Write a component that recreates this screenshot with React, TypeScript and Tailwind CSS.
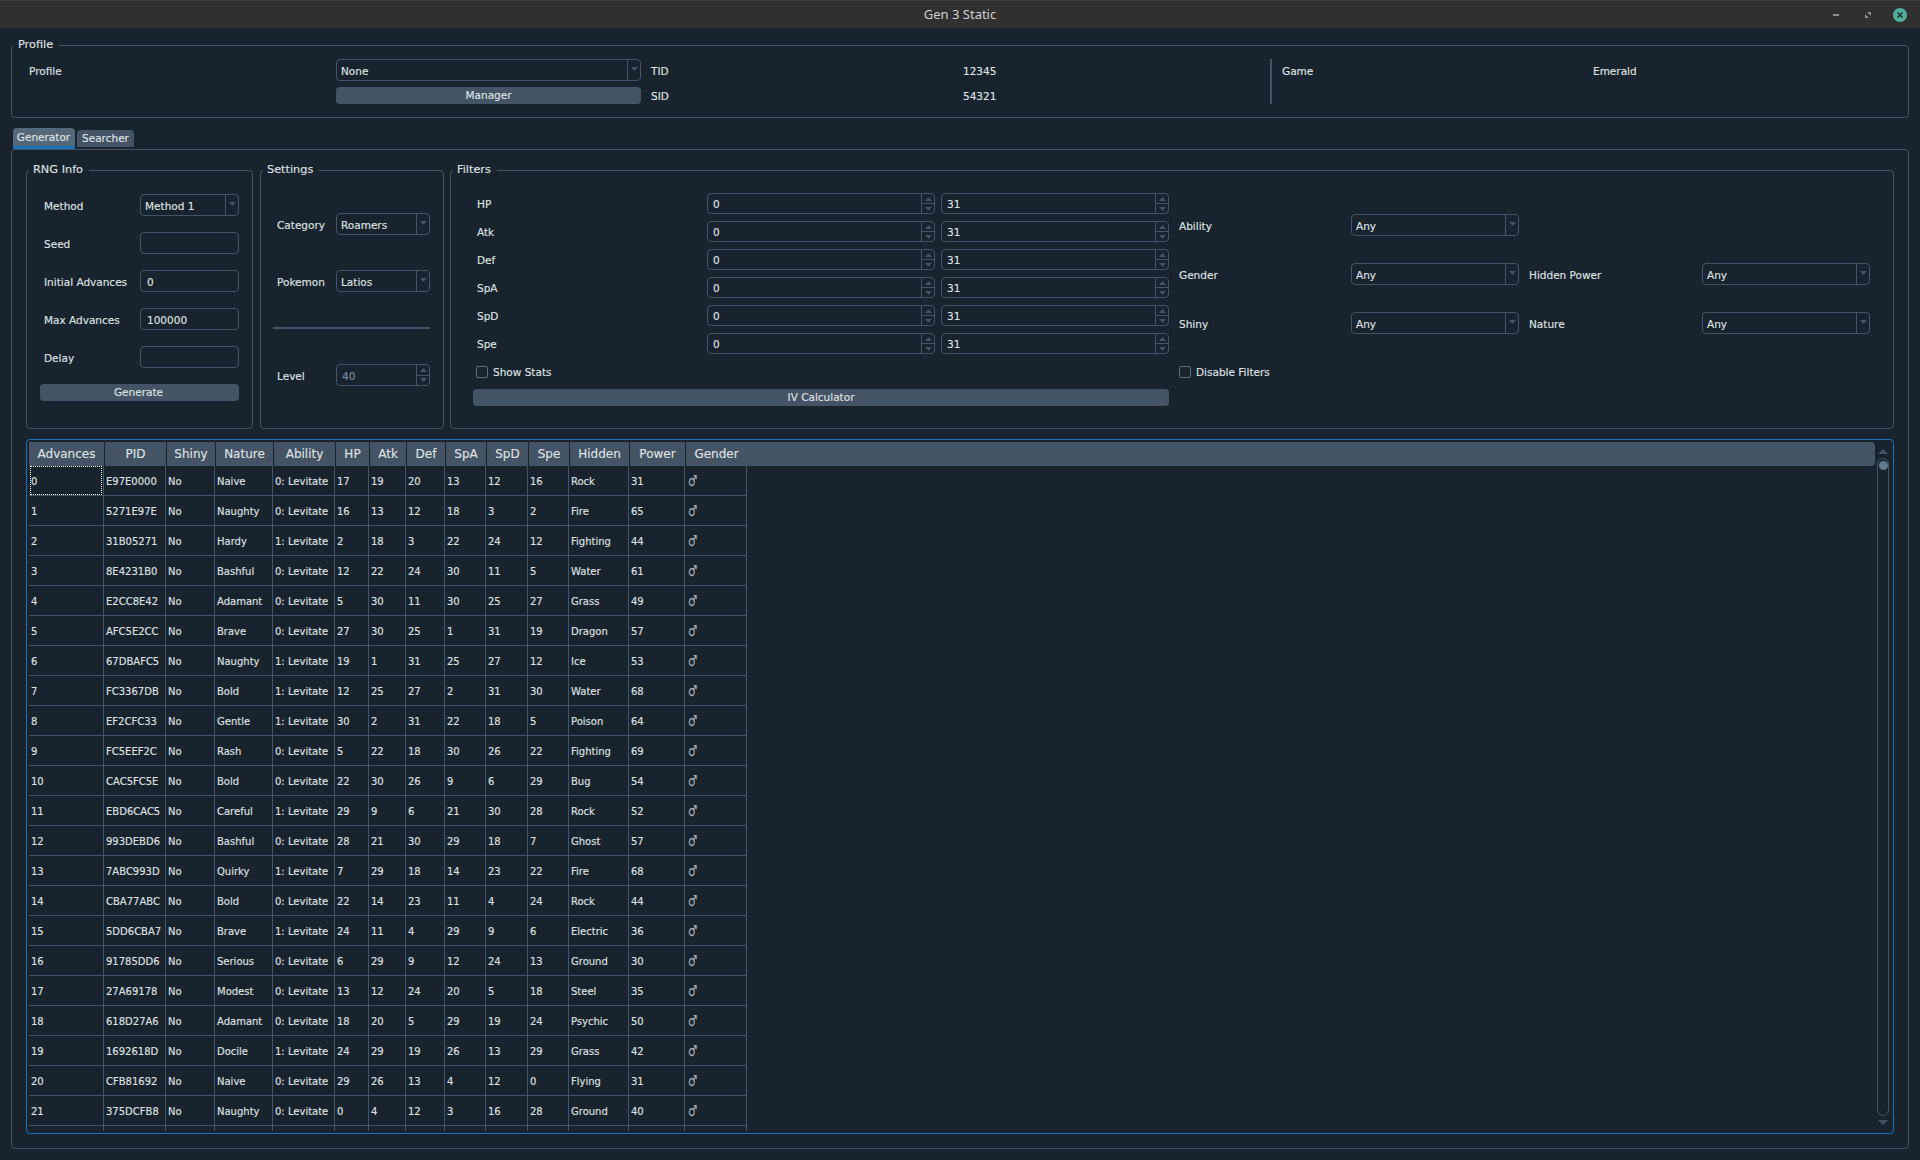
const rows: string[][] = [
  ["0", "E97E0000", "Naive", "0", "17", "19", "20", "13", "12", "16", "Rock", "31"],
  ["1", "5271E97E", "Naughty", "0", "16", "13", "12", "18", "3", "2", "Fire", "65"],
  ["2", "31B05271", "Hardy", "1", "2", "18", "3", "22", "24", "12", "Fighting", "44"],
  ["3", "8E4231B0", "Bashful", "0", "12", "22", "24", "30", "11", "5", "Water", "61"],
  ["4", "E2CC8E42", "Adamant", "0", "5", "30", "11", "30", "25", "27", "Grass", "49"],
  ["5", "AFC5E2CC", "Brave", "0", "27", "30", "25", "1", "31", "19", "Dragon", "57"],
  ["6", "67DBAFC5", "Naughty", "1", "19", "1", "31", "25", "27", "12", "Ice", "53"],
  ["7", "FC3367DB", "Bold", "1", "12", "25", "27", "2", "31", "30", "Water", "68"],
  ["8", "EF2CFC33", "Gentle", "1", "30", "2", "31", "22", "18", "5", "Poison", "64"],
  ["9", "FC5EEF2C", "Rash", "0", "5", "22", "18", "30", "26", "22", "Fighting", "69"],
  ["10", "CAC5FC5E", "Bold", "0", "22", "30", "26", "9", "6", "29", "Bug", "54"],
  ["11", "EBD6CAC5", "Careful", "1", "29", "9", "6", "21", "30", "28", "Rock", "52"],
  ["12", "993DEBD6", "Bashful", "0", "28", "21", "30", "29", "18", "7", "Ghost", "57"],
  ["13", "7ABC993D", "Quirky", "1", "7", "29", "18", "14", "23", "22", "Fire", "68"],
  ["14", "CBA77ABC", "Bold", "0", "22", "14", "23", "11", "4", "24", "Rock", "44"],
  ["15", "5DD6CBA7", "Brave", "1", "24", "11", "4", "29", "9", "6", "Electric", "36"],
  ["16", "91785DD6", "Serious", "0", "6", "29", "9", "12", "24", "13", "Ground", "30"],
  ["17", "27A69178", "Modest", "0", "13", "12", "24", "20", "5", "18", "Steel", "35"],
  ["18", "618D27A6", "Adamant", "0", "18", "20", "5", "29", "19", "24", "Psychic", "50"],
  ["19", "1692618D", "Docile", "1", "24", "29", "19", "26", "13", "29", "Grass", "42"],
  ["20", "CFB81692", "Naive", "0", "29", "26", "13", "4", "12", "0", "Flying", "31"],
  ["21", "375DCFB8", "Naughty", "0", "0", "4", "12", "3", "16", "28", "Ground", "40"],
];

const headers = ["Advances", "PID", "Shiny", "Nature", "Ability", "HP", "Atk", "Def", "SpA", "SpD", "Spe", "Hidden", "Power", "Gender"];

const Arrow = ({ up = false }: { up?: boolean }) => (
  <svg width="7" height="4" viewBox="0 0 7 4" className="block">
    <polygon points={up ? "3.5,0 7,4 0,4" : "0,0 7,0 3.5,4"} fill="#455364" />
  </svg>
);

const ScrollArrow = ({ up = false }: { up?: boolean }) => (
  <svg width="10" height="5" viewBox="0 0 10 5" className="block">
    <polygon points={up ? "5,0 10,5 0,5" : "0,0 10,0 5,5"} fill="#455364" />
  </svg>
);

const GroupBox = ({ title, className, children }: { title?: string; className: string; children: React.ReactNode }) => (
  <div className={`relative border border-[#455364] rounded-[4px] ${className}`}>
    {title && (
      <span className="absolute -top-[8px] left-[2px] h-[14px] leading-[14px] pl-[4px] pr-[6px] bg-[#19232d] text-[11.3px]">
        {title}
      </span>
    )}
    {children}
  </div>
);

const Label = ({ text, className = "" }: { text: string; className?: string }) => (
  <span className={`pt-[3px] ${className}`}>{text}</span>
);

const Combo = ({ value, className }: { value: string; className: string }) => (
  <div className={`h-[22px] flex items-center border border-[#455364] rounded-[4px] ${className}`}>
    <span className="flex-1 pl-[4px] pt-[3px] truncate">{value}</span>
    <span className="w-[13px] h-full border-l border-[#455364] flex items-center justify-center pb-[2px]">
      <Arrow />
    </span>
  </div>
);

const TextInput = ({ value = "" }: { value?: string }) => (
  <div className="w-[99px] h-[22px] flex items-center pl-[6px] pt-[3px] border border-[#455364] rounded-[4px]">{value}</div>
);

const Spin = ({ value, className, disabled = false }: { value: string; className: string; disabled?: boolean }) => (
  <div className={`flex items-center border border-[#455364] rounded-[4px] ${className}`}>
    <span className={`flex-1 pl-[5px] pt-[3px] ${disabled ? "text-[#788d9c]" : ""}`}>{value}</span>
    <span className="w-[13px] h-full border-l border-[#455364] flex flex-col">
      <span className="flex-1 border-b border-[#455364] flex items-center justify-center">
        <Arrow up />
      </span>
      <span className="flex-1 flex items-center justify-center">
        <Arrow />
      </span>
    </span>
  </div>
);

const Button = ({ label, className }: { label: string; className: string }) => (
  <div className={`h-[17px] pt-[1px] bg-[#455364] rounded-[4px] flex items-center justify-center ${className}`}>{label}</div>
);

const Check = ({ label, className }: { label: string; className: string }) => (
  <div className={`h-[12px] flex items-center gap-[5px] ${className}`}>
    <span className="w-[12px] h-[12px] border border-[#5d6d7e] rounded-[2px]" />
    <span className="pt-[2px]">{label}</span>
  </div>
);

const rngFields: { label: string; value?: string }[] = [
  { label: "Seed" },
  { label: "Initial Advances", value: "0" },
  { label: "Max Advances", value: "100000" },
  { label: "Delay" },
];

const statLabels = ["HP", "Atk", "Def", "SpA", "SpD", "Spe"];

const columns = "grid grid-cols-[75px_62px_49px_58px_62px_34px_37px_39px_41px_42px_41px_60px_56px_62px]";

export default function App() {
  return (
    <div className="w-[1920px] h-[1160px] overflow-hidden flex flex-col bg-[#19232d] text-[#dfe1e2] text-[10.5px] font-['DejaVu_Sans',sans-serif] [-webkit-text-stroke:0.15px]">
      <div className="relative h-[28px] shrink-0 flex items-center justify-center bg-[#303030] border-t border-[#3a3a3a] text-[13px] text-[#cfcfcf] font-['Noto_Sans',sans-serif] [-webkit-text-stroke:0px]">
        Gen 3 Static
        <div className="absolute right-[13px] top-0 h-full flex items-center">
          <span className="w-[6px] h-[2px] bg-[#8f8f8f]" />
          <svg width="6" height="6" viewBox="0 0 6 6" className="ml-[26px]">
            <polygon points="2,0 6,0 6,4" fill="#8f8f8f" />
            <polygon points="0,2 4,6 0,6" fill="#8f8f8f" />
          </svg>
          <span className="ml-[22px] w-[14px] h-[14px] rounded-full bg-[#4fb09c] flex items-center justify-center">
            <svg width="8" height="8" viewBox="0 0 8 8">
              <path d="M1.5 1.5 6.5 6.5 M6.5 1.5 1.5 6.5" stroke="#26302e" strokeWidth="1.6" />
            </svg>
          </span>
        </div>
      </div>

      <GroupBox title="Profile" className="mx-[11px] mt-[17px] h-[73px] shrink-0">
        <div className="grid grid-cols-[307px_305px_322px_307px_12px_311px_1fr] grid-rows-[22px_17px] gap-y-[6px] pl-[17px] pt-[13px] items-center">
          <Label text="Profile" />
          <Combo value="None" className="w-full" />
          <Label text="TID" className="pl-[10px]" />
          <Label text="12345" />
          <span className="row-span-2 w-[2px] h-full bg-[#455364]" />
          <Label text="Game" />
          <Label text="Emerald" />
          <span />
          <Button label="Manager" className="w-full" />
          <Label text="SID" className="pl-[10px]" />
          <Label text="54321" />
        </div>
      </GroupBox>

      <div className="ml-[13px] mt-[10px] h-[21px] shrink-0 flex items-start gap-[2px]">
        <div className="w-[62px] h-[21px] pt-[2px] pr-[1px] flex items-center justify-center bg-[#54687a] border-b-[3px] border-[#1a72bb] rounded-t-[4px]">
          Generator
        </div>
        <div className="w-[57px] h-[17px] mt-[2px] flex items-center justify-center bg-[#455364] rounded-t-[4px]">
          Searcher
        </div>
      </div>

      <GroupBox className="mx-[11px] h-[1000px] shrink-0 pl-[14px] pr-[14px] pt-[20px]">
        <div className="flex">
          <GroupBox title="RNG Info" className="w-[227px] h-[259px] pl-[13px] pt-[23px] mr-[7px]">
            <div className="flex items-center h-[22px] pl-[4px] mb-[16px]">
              <Label text="Method" className="w-[96px]" />
              <Combo value="Method 1" className="w-[99px]" />
            </div>
            {rngFields.map((field) => (
              <div key={field.label} className="flex items-center h-[22px] pl-[4px] mb-[16px]">
                <Label text={field.label} className="w-[96px]" />
                <TextInput value={field.value} />
              </div>
            ))}
            <Button label="Generate" className="w-[199px] pr-[2px]" />
          </GroupBox>

          <GroupBox title="Settings" className="w-[184px] h-[259px] pt-[42px] mr-[6px] flex flex-col gap-[35px]">
            <div className="flex items-center pl-[16px]">
              <Label text="Category" className="w-[59px]" />
              <Combo value="Roamers" className="w-[94px]" />
            </div>
            <div className="flex items-center pl-[16px]">
              <Label text="Pokemon" className="w-[59px]" />
              <Combo value="Latios" className="w-[94px]" />
            </div>
            <div className="ml-[12px] w-[157px] h-[2px] bg-[#455364]" />
            <div className="flex items-center pl-[16px]">
              <Label text="Level" className="w-[59px]" />
              <Spin value="40" disabled className="w-[94px] h-[22px]" />
            </div>
          </GroupBox>

          <GroupBox title="Filters" className="w-[1444px] h-[259px] flex">
            <div className="w-[718px] pl-[22px] pt-[22px] flex flex-col">
              <div className="flex flex-col gap-[7px]">
                {statLabels.map((label) => (
                  <div key={label} className="flex items-center h-[21px] pl-[4px]">
                    <Label text={label} className="w-[230px]" />
                    <Spin value="0" className="w-[228px] h-full" />
                    <Spin value="31" className="w-[228px] h-full ml-[6px]" />
                  </div>
                ))}
              </div>
              <Check label="Show Stats" className="ml-[3px] mt-[12px]" />
              <Button label="IV Calculator" className="w-[696px] mt-[11px]" />
            </div>
            <div className="pl-[10px] pt-[43px] flex flex-col">
              <div className="grid grid-cols-[172px_168px_10px_173px_168px] grid-rows-[22px_22px_22px] gap-y-[27px] items-center">
                <Label text="Ability" />
                <Combo value="Any" className="w-full" />
                <span className="col-span-3" />
                <Label text="Gender" />
                <Combo value="Any" className="w-full" />
                <span />
                <Label text="Hidden Power" />
                <Combo value="Any" className="w-full" />
                <Label text="Shiny" />
                <Combo value="Any" className="w-full" />
                <span />
                <Label text="Nature" />
                <Combo value="Any" className="w-full" />
              </div>
              <Check label="Disable Filters" className="mt-[32px]" />
            </div>
          </GroupBox>
        </div>

        <div className="mt-[10px] w-[1868px] h-[695px] flex border border-[#1a72bb] rounded-[4px] pl-[2px] pt-[2px]">
          <div className="w-[1846px]">
            <div className="h-[24px] bg-[#455364] rounded-r-[4px] text-[12px]">
              <div className={columns}>
                {headers.map((header, i) => (
                  <div key={header} className={`h-[24px] flex items-center justify-center ${i > 0 ? "border-l border-[#19232d]" : ""}`}>
                    {header}
                  </div>
                ))}
              </div>
            </div>
            <div className="relative h-[665px] overflow-hidden text-[10px]">
              <div className="absolute left-[1px] top-0 w-[72px] h-[29px] border border-dotted border-white" />
              {[...rows, null].map((row, i) => (
                <div key={i} className={`${columns} w-[718px] h-[30px] border-b border-[#455364]`}>
                  {(row
                    ? [row[0], row[1], "No", row[2], `${row[3]}: Levitate`, ...row.slice(4), "♂"]
                    : headers.map(() => "")
                  ).map((cell, j) => (
                    <div key={j} className="flex items-center pl-[2px] pt-[1px] border-r border-[#455364] whitespace-nowrap">
                      {j === 13 ? <span className="ml-[1px] mt-[1px] text-[15px] text-[#a9b0b6] inline-block scale-x-[0.7] origin-left">{cell}</span> : cell}
                    </div>
                  ))}
                </div>
              ))}
            </div>
          </div>
          <div className="ml-[2px] w-[12px] pt-[7px] pb-[8px] flex flex-col items-center gap-[4px]">
            <ScrollArrow up />
            <div className="flex-1 w-[12px] border border-[#455364] rounded-[6px] p-[0.5px]">
              <div className="w-[9px] h-[9px] mt-[1px] rounded-full bg-[#60798b]" />
            </div>
            <ScrollArrow />
          </div>
        </div>
      </GroupBox>
    </div>
  );
}
